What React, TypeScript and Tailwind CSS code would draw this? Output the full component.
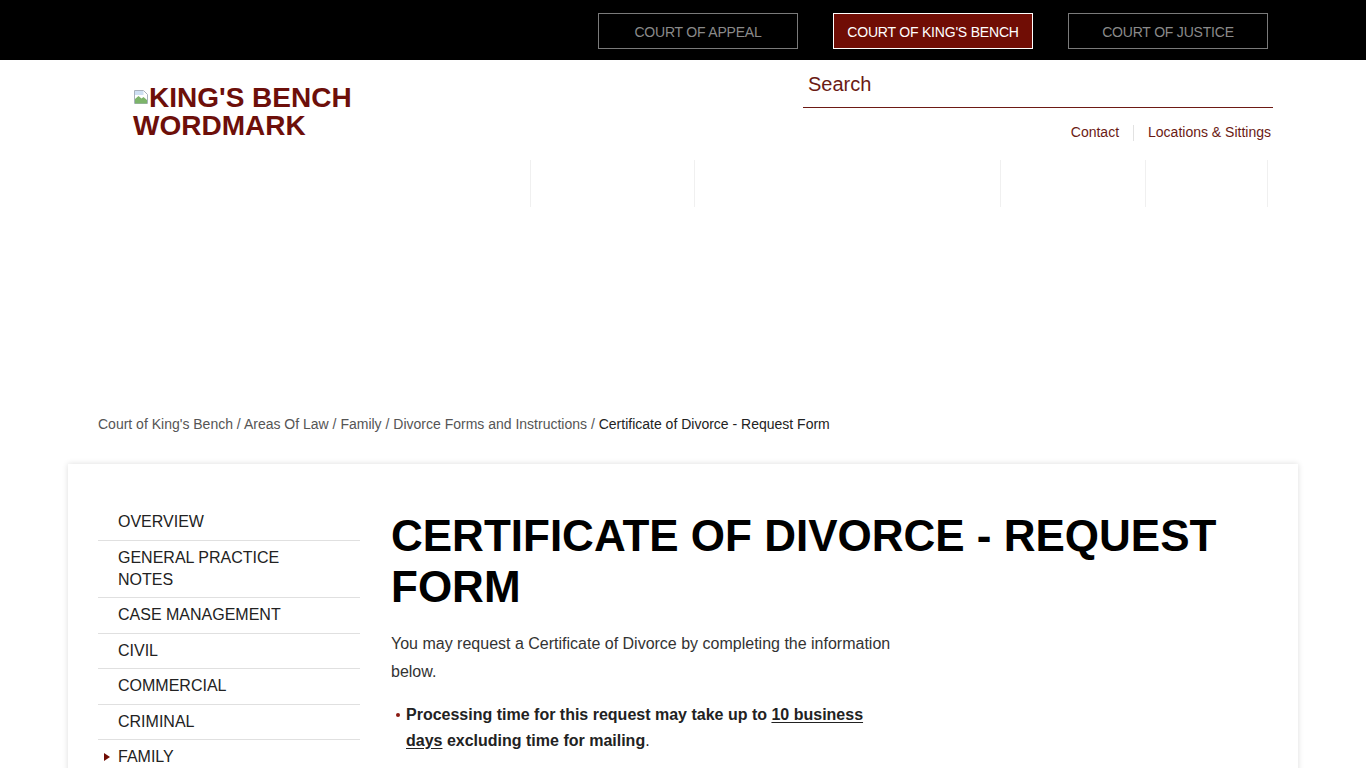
import { Fragment } from "react";

const courts = [
  { label: "COURT OF APPEAL", active: false },
  { label: "COURT OF KING'S BENCH", active: true },
  { label: "COURT OF JUSTICE", active: false },
];

const crumbs = [
  "Court of King's Bench",
  "Areas Of Law",
  "Family",
  "Divorce Forms and Instructions",
];

const sideNav = [
  "OVERVIEW",
  "GENERAL PRACTICE NOTES",
  "CASE MANAGEMENT",
  "CIVIL",
  "COMMERCIAL",
  "CRIMINAL",
  "FAMILY",
];

const navCols = ["w-[164px]", "w-[306px]", "w-[145px]", "w-[123px]"];

const BrokenImage = () => (
  <svg width="16" height="16" viewBox="0 0 16 16" className="inline-block align-[2px]">
    <path d="M1.5 1.5h9l4 4v9h-13z" fill="#fff" stroke="#a9b2bd" />
    <path d="M2 10l3.5-3 3 2.5 2-1.5 3.5 3v3.5H2z" fill="#7cb46a" />
    <path d="M2 2h8.5v4H2z" fill="#cfe0f3" />
  </svg>
);

const App = () => {
  return (
    <div className="min-h-[768px] bg-white font-['Liberation_Sans',Arial,sans-serif]">
      {/* court switcher */}
      <div className="bg-black h-[60px]">
        <div className="max-w-[1170px] mx-auto flex justify-end gap-[35px] pt-[13px]">
          {courts.map((c) => (
            <div
              key={c.label}
              className={`w-[200px] h-[36px] flex items-center justify-center border text-[14px] tracking-[-0.2px] pt-[2px] ${
                c.active
                  ? "bg-[#700d05] border-white text-white"
                  : "border-[#7a7a7a] text-[#8a8a8a]"
              }`}
            >
              {c.label}
            </div>
          ))}
        </div>
      </div>

      {/* header */}
      <div className="max-w-[1170px] mx-auto">
        <div className="flex justify-between">
          <div className="ml-[35px] mt-[24px] w-[240px] text-[28px] leading-[28px] font-bold text-[#6d0f0a]">
            <BrokenImage />
            KING'S BENCH WORDMARK
          </div>
          <div className="w-[470px] mr-[-5px]">
            <div className="h-[48px] border-b border-[#6d1a14] flex items-center pl-[5px]">
              <span className="text-[20px] text-[#6b1a14]">Search</span>
            </div>
            <div className="flex justify-end items-center mt-[14px] pr-[2px] text-[14px] text-[#6b1a14]">
              <span>Contact</span>
              <span className="w-px h-[16px] bg-[#e2e2e2] mx-[14px]"></span>
              <span>Locations &amp; Sittings</span>
            </div>
          </div>
        </div>
        <div className="flex justify-end mt-[17px] h-[47px]">
          {navCols.map((w, i) => (
            <div
              key={i}
              className={`${w} h-full border-l border-[#f0f0f0] ${i === navCols.length - 1 ? "border-r" : ""}`}
            ></div>
          ))}
        </div>

        {/* breadcrumb */}
        <div className="mt-[207px] text-[14px] leading-[20px] text-[#555]">
          {crumbs.map((c) => (
            <Fragment key={c}>
              <span>{c}</span>
              <span> / </span>
            </Fragment>
          ))}
          <span className="text-[#222]">Certificate of Divorce - Request Form</span>
        </div>
      </div>

      {/* main card */}
      <div className="max-w-[1230px] mx-auto mt-[30px] bg-white shadow-[0_0_6px_rgba(0,0,0,0.14)] px-[30px] pt-[41px] pb-[40px] flex">
        <ul className="w-[262px] shrink-0">
          {sideNav.map((item) => (
            <li
              key={item}
              className="relative border-b border-[#e0e0e0] last:border-b-0 py-[6.25px] pl-[20px] pr-[40px] text-[16px] leading-[22px] text-[#222]"
            >
              {item === "FAMILY" && (
                <span className="absolute left-[6px] top-[13px] w-0 h-0 border-y-[4px] border-y-transparent border-l-[6px] border-l-[#700d05]"></span>
              )}
              {item}
            </li>
          ))}
        </ul>
        <div className="ml-[31px] flex-1">
          <h1 className="mt-[5px] text-[44px] leading-[51px] font-bold text-black">
            CERTIFICATE OF DIVORCE - REQUEST FORM
          </h1>
          <div className="max-w-[500px]">
            <p className="mt-[18px] text-[16px] leading-[28px] text-[#333]">
              You may request a Certificate of Divorce by completing the information below.
            </p>
            <ul className="mt-[16px] text-[16px] leading-[26px] font-bold text-[#222]">
              <li className="relative pl-[15px]">
                <span className="absolute left-[5px] top-[11px] w-[4px] h-[4px] rounded-full bg-[#8b1a12]"></span>
                Processing time for this request may take up to{" "}
                <span className="underline underline-offset-2">10 business days</span> excluding time for
                mailing<span className="font-normal">.</span>
              </li>
            </ul>
          </div>
        </div>
      </div>
    </div>
  );
};

export default App;
